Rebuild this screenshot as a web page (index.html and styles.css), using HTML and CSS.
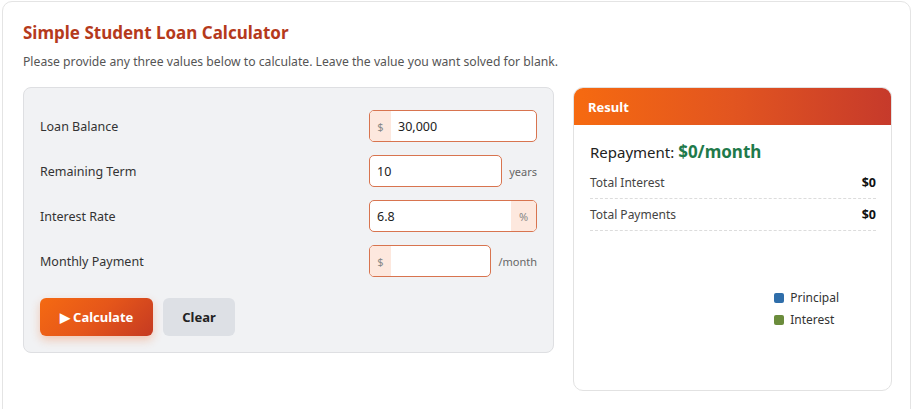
FILE: index.html
```html
<!DOCTYPE html>
<html>
<head>
<meta charset="utf-8">
<link rel="stylesheet" href="styles.css">
</head>
<body>
<div class="card">
  <h1 class="title">Simple Student Loan Calculator</h1>
  <p class="subtitle">Please provide any three values below to calculate. Leave the value you want solved for blank.</p>
  <div class="layout">
    <div class="form-panel">
      <div class="row">
        <span class="label">Loan Balance</span>
        <div class="control">
          <div class="field"><span class="addon">$</span><span class="value">30,000</span></div>
        </div>
      </div>
      <div class="row">
        <span class="label">Remaining Term</span>
        <div class="control">
          <div class="field"><span class="value">10</span></div>
          <span class="unit">years</span>
        </div>
      </div>
      <div class="row">
        <span class="label">Interest Rate</span>
        <div class="control">
          <div class="field"><span class="value">6.8</span><span class="addon addon-right">%</span></div>
        </div>
      </div>
      <div class="row">
        <span class="label">Monthly Payment</span>
        <div class="control">
          <div class="field"><span class="addon">$</span><span class="value"></span></div>
          <span class="unit">/month</span>
        </div>
      </div>
      <div class="buttons">
        <button class="btn btn-primary">&#9654; Calculate</button>
        <button class="btn btn-secondary">Clear</button>
      </div>
    </div>
    <div class="result-panel">
      <div class="result-head">Result</div>
      <div class="result-body">
        <div class="repayment">Repayment: <strong>$0/month</strong></div>
        <div class="stat"><span>Total Interest</span><b>$0</b></div>
        <div class="stat"><span>Total Payments</span><b>$0</b></div>
        <div class="chart">
          <div class="legend">
            <div class="legend-item"><span class="swatch swatch-principal"></span>Principal</div>
            <div class="legend-item"><span class="swatch swatch-interest"></span>Interest</div>
          </div>
        </div>
      </div>
    </div>
  </div>
</div>
</body>
</html>
```
FILE: styles.css
```css
* { box-sizing: border-box; }
html, body {
  margin: 0;
  padding: 0;
  background: #fff;
  height: 409px;
  overflow: hidden;
}
body {
  font-family: "Noto Sans", "Open Sans", sans-serif;
  color: #333;
}
.card {
  margin: 1px 1px 0 2px;
  height: 420px;
  border: 1px solid #e4e4e4;
  border-radius: 10px;
  padding: 18px 18px 0 20px;
}
.title {
  margin: 0;
  font-size: 17px;
  font-weight: 700;
  color: #b53a1c;
  line-height: 26px;
}
.subtitle {
  margin: 7px 0 0;
  font-size: 12.2px;
  color: #555;
  line-height: 18px;
}
.layout {
  margin-top: 16px;
  display: grid;
  grid-template-columns: 531fr 319fr;
  gap: 19px;
  align-items: start;
}
.form-panel {
  background: #f1f2f4;
  border: 1px solid #dedfe2;
  border-radius: 8px;
  padding: 22px 16px 16px 16px;
  display: flex;
  flex-direction: column;
  gap: 13px;
}
.row {
  display: grid;
  grid-template-columns: 1fr 168px;
  align-items: center;
}
.label {
  font-size: 12.5px;
  color: #333;
}
.control {
  display: flex;
  align-items: center;
  gap: 7px;
  height: 32px;
}
.field {
  flex: 1;
  height: 32px;
  display: flex;
  background: #fff;
  border: 1px solid #d8744f;
  border-radius: 5px;
  overflow: hidden;
}
.addon {
  width: 21px;
  flex: none;
  background: #fde8de;
  color: #888;
  font-size: 11px;
  display: flex;
  align-items: center;
  justify-content: center;
}
.addon-right { width: 25px; }
.value {
  flex: 1;
  font-size: 12.5px;
  color: #222;
  display: flex;
  align-items: center;
  padding-left: 7px;
}
.unit {
  font-size: 11px;
  color: #666;
}
.buttons {
  display: flex;
  gap: 10px;
  margin-top: 8px;
}
.btn {
  height: 38px;
  border: none;
  border-radius: 6px;
  font-family: inherit;
  font-size: 13px;
  font-weight: 700;
  padding: 0;
}
.btn-primary {
  width: 113px;
  color: #fff;
  background: linear-gradient(135deg, #f56a12 0%, #e5561a 50%, #c53a22 100%);
  box-shadow: 0 4px 10px rgba(238, 100, 30, 0.3);
}
.btn-secondary {
  width: 72px;
  color: #222;
  background: #dde0e5;
}
.result-panel {
  border: 1px solid #e2e2e2;
  border-radius: 10px;
  overflow: hidden;
  background: #fff;
}
.result-head {
  height: 37px;
  background: linear-gradient(90deg, #f66a10 0%, #e25520 50%, #c63a2b 100%);
  color: #fff;
  font-weight: 700;
  font-size: 13px;
  display: flex;
  align-items: center;
  padding-left: 14px;
}
.result-body {
  padding: 16px 15px 0 16px;
}
.repayment {
  font-size: 15px;
  color: #222;
  line-height: 22px;
  margin-bottom: 4px;
}
.repayment strong {
  color: #1f7a4b;
  font-size: 17px;
  font-weight: 700;
}
.stat {
  display: flex;
  justify-content: space-between;
  align-items: center;
  height: 32px;
  font-size: 12px;
  color: #444;
  border-bottom: 1px dashed #dcdcdc;
}
.stat b { color: #111; font-size: 12.5px; }
.chart {
  height: 159px;
  display: flex;
  align-items: center;
  justify-content: flex-end;
  padding-right: 37px;
  padding-bottom: 4px;
}
.legend {
  display: flex;
  flex-direction: column;
  gap: 6px;
}
.legend-item {
  display: flex;
  align-items: center;
  gap: 6px;
  font-size: 12px;
  color: #333;
  line-height: 16px;
}
.swatch {
  width: 10px;
  height: 10px;
  border-radius: 2px;
}
.swatch-principal { background: #2f6eaa; }
.swatch-interest { background: #6b8c3c; }
```
